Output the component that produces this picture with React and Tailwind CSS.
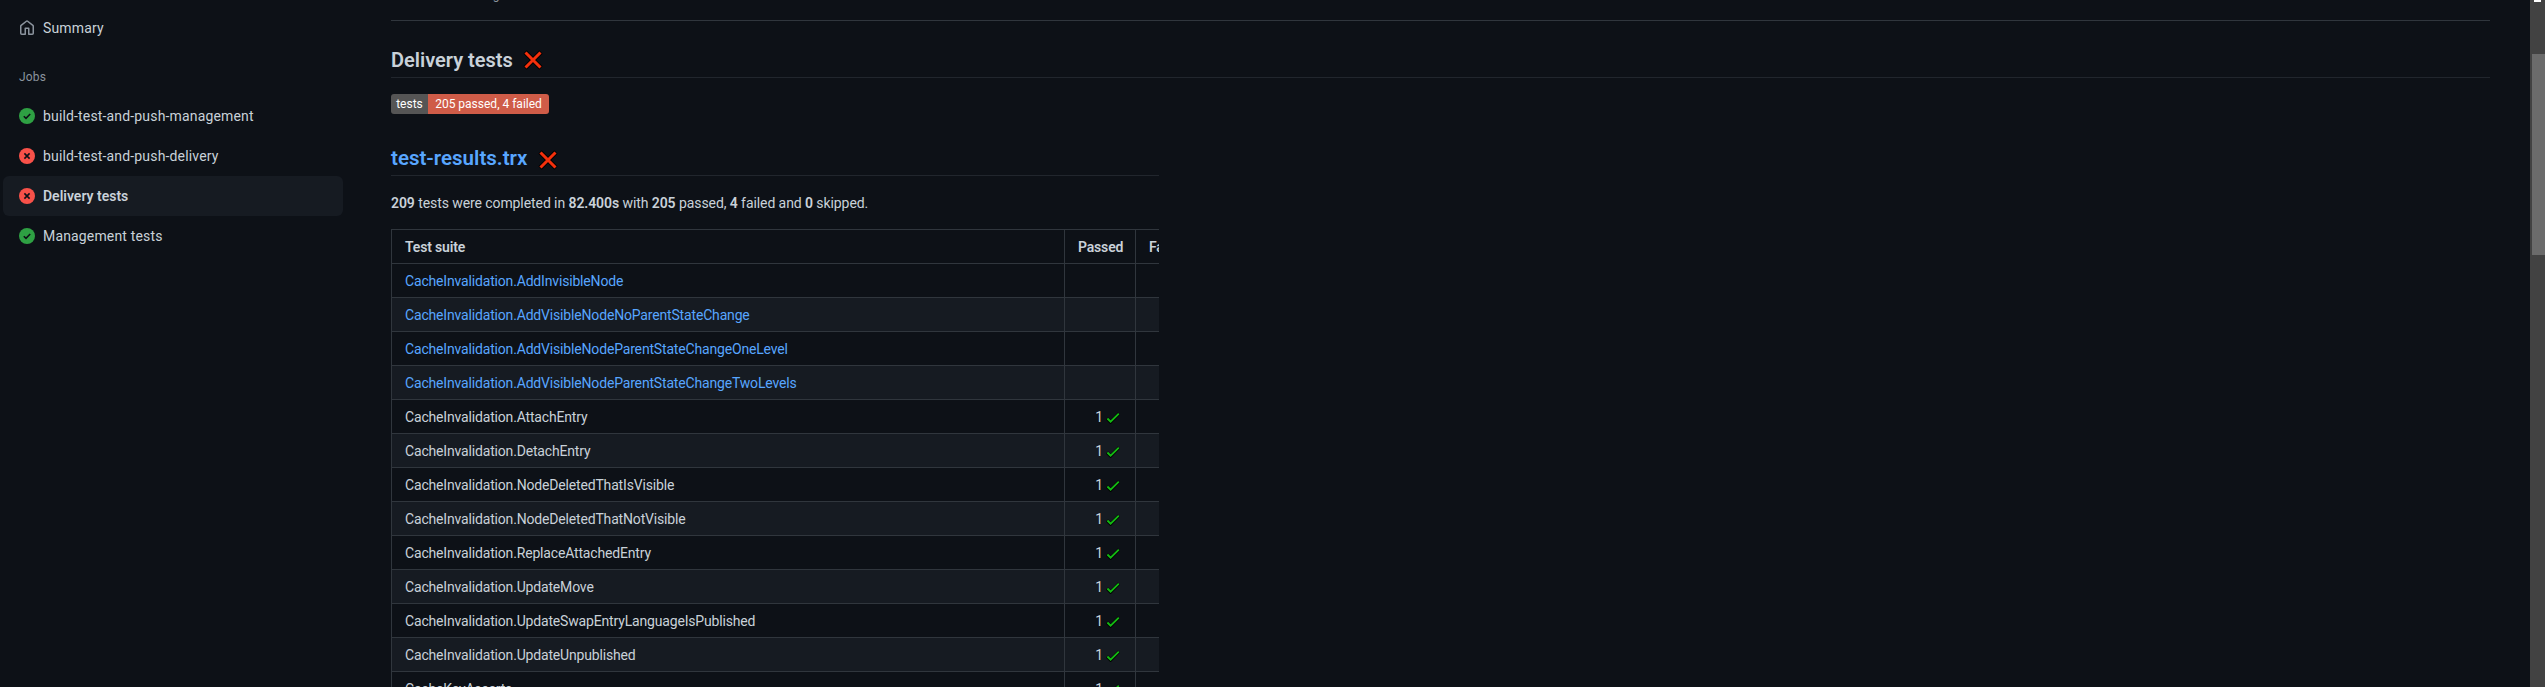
const suites = [
  { name: "CacheInvalidation.AddInvisibleNode", link: true },
  { name: "CacheInvalidation.AddVisibleNodeNoParentStateChange", link: true },
  { name: "CacheInvalidation.AddVisibleNodeParentStateChangeOneLevel", link: true },
  { name: "CacheInvalidation.AddVisibleNodeParentStateChangeTwoLevels", link: true },
  { name: "CacheInvalidation.AttachEntry", passed: 1 },
  { name: "CacheInvalidation.DetachEntry", passed: 1 },
  { name: "CacheInvalidation.NodeDeletedThatIsVisible", passed: 1 },
  { name: "CacheInvalidation.NodeDeletedThatNotVisible", passed: 1 },
  { name: "CacheInvalidation.ReplaceAttachedEntry", passed: 1 },
  { name: "CacheInvalidation.UpdateMove", passed: 1 },
  { name: "CacheInvalidation.UpdateSwapEntryLanguageIsPublished", passed: 1 },
  { name: "CacheInvalidation.UpdateUnpublished", passed: 1 },
  { name: "CacheKeyAsserts", passed: 1 },
];

const jobs = [
  { name: "build-test-and-push-management", ok: true },
  { name: "build-test-and-push-delivery", ok: false },
  { name: "Delivery tests", ok: false, active: true },
  { name: "Management tests", ok: true },
];

function StatusIcon({ ok }) {
  return (
    <svg width="16" height="16" viewBox="0 0 16 16" className="shrink-0">
      <circle cx="8" cy="8" r="8" fill={ok ? "#2ea043" : "#f85149"} />
      {ok ? (
        <path d="M4.8 8.2l2.2 2.2 4.2-4.4" fill="none" stroke="#0d1117" strokeWidth="1.6" />
      ) : (
        <path d="M5.4 5.4l5.2 5.2M10.6 5.4l-5.2 5.2" fill="none" stroke="#0d1117" strokeWidth="1.6" />
      )}
    </svg>
  );
}

function RedCross({ className = "" }) {
  return (
    <svg width="20" height="20" viewBox="0 0 20 20" className={`shrink-0 ${className}`}>
      <path d="M2 2l16 16M18 2L2 18" stroke="#000" strokeWidth="4.6" />
      <path d="M2.5 2.5l15 15M17.5 2.5l-15 15" stroke="#f4300c" strokeWidth="3" />
    </svg>
  );
}

function GreenCheck() {
  return (
    <svg width="14" height="12" viewBox="0 0 14 12" className="shrink-0">
      <path d="M1 6.5l3.6 3.6L13 1.6" fill="none" stroke="#000" strokeWidth="3.2" />
      <path d="M1.4 6.5l3.2 3.2L12.8 1.6" fill="none" stroke="#13b913" strokeWidth="1.9" />
    </svg>
  );
}

function Sidebar() {
  return (
    <aside className="w-[344px] shrink-0 pl-[3px] pt-[12px] text-[14px] tracking-[0.16px] text-[#c9d1d9]">
      <div className="w-[340px] h-[32px] pl-[16px] flex items-center gap-[8px]">
        <svg width="16" height="16" viewBox="0 0 16 16" fill="#8b949e">
          <path d="M6.906.664a1.749 1.749 0 0 1 2.187 0l5.25 4.2c.415.332.657.835.657 1.367v7.019A1.75 1.75 0 0 1 13.25 15h-3.5a.75.75 0 0 1-.75-.75V9H7v5.25a.75.75 0 0 1-.75.75h-3.5A1.75 1.75 0 0 1 1 13.25V6.23c0-.531.242-1.034.657-1.366l5.25-4.2Zm1.25 1.171a.25.25 0 0 0-.312 0l-5.25 4.2a.25.25 0 0 0-.094.196v7.019c0 .138.112.25.25.25H5.5V8.25a.75.75 0 0 1 .75-.75h3.5a.75.75 0 0 1 .75.75v5.25h2.75a.25.25 0 0 0 .25-.25V6.23a.25.25 0 0 0-.094-.195Z" />
        </svg>
        <span>Summary</span>
      </div>
      <div className="mt-[23px] mb-[9px] pl-[16px] text-[12px] leading-[20px] text-[#8b949e]">Jobs</div>
      <ul className="flex flex-col w-[340px]">
        {jobs.map((j) => (
          <li
            key={j.name}
            className={`h-[40px] pl-[16px] flex items-center gap-[8px] rounded-[6px] ${j.active ? "bg-[#161b22] font-semibold tracking-normal" : ""}`}
          >
            <StatusIcon ok={j.ok} />
            <span>{j.name}</span>
          </li>
        ))}
      </ul>
    </aside>
  );
}

function ResultsTable() {
  return (
    <div className="w-[768px] overflow-hidden mt-[15px]">
      <table className="w-[900px] table-fixed border-collapse text-[14px] leading-[21px] tracking-[-0.17px] text-[#c9d1d9]">
        <colgroup>
          <col className="w-[673px]" />
          <col className="w-[71px]" />
          <col className="w-[156px]" />
        </colgroup>
        <thead>
          <tr className="h-[34px]">
            <th className="border border-[#30363d] px-[13px] pt-[2px] text-left font-semibold">Test suite</th>
            <th className="border border-[#30363d] px-[13px] pt-[2px] font-semibold">Passed</th>
            <th className="border border-[#30363d] px-[13px] pt-[2px] text-left font-semibold">Failed</th>
          </tr>
        </thead>
        <tbody>
          {suites.map((s, i) => (
            <tr key={s.name} className={`h-[34px] ${i % 2 === 0 ? "" : "bg-[#161b22]"}`}>
              <td className={`border border-[#30363d] px-[13px] pt-[2px] ${s.link ? "text-[#58a6ff]" : ""}`}>{s.name}</td>
              <td className="border border-[#30363d] px-[13px] pt-[2px]">
                {s.passed && (
                  <div className="flex items-center justify-end gap-[3px] mr-[2px]">
                    <span>{s.passed}</span>
                    <GreenCheck />
                  </div>
                )}
              </td>
              <td className="border border-[#30363d] px-[13px]"></td>
            </tr>
          ))}
        </tbody>
      </table>
    </div>
  );
}

function Main() {
  return (
    <main className="flex-1 min-w-0 pl-[47px] text-[#c9d1d9]">
      <div className="-mt-[15px] text-[12px] leading-[20px] text-[#8b949e]">failed 15 minutes ago in 8s</div>
      <div className="w-[2099px] border-b border-[#30363d] mt-[15px]"></div>

      <h2 className="w-[2099px] mt-[23px] pb-[1px] flex items-center gap-[10px] text-[20px] leading-[32px] font-semibold border-b border-[#21262d]">
        Delivery tests <RedCross />
      </h2>

      <div className="mt-[16px] h-[20px] w-[158px] flex text-[12px] leading-[20px] rounded-[3px] overflow-hidden text-white">
        <span className="w-[37px] bg-[#555] text-center">tests</span>
        <span className="flex-1 bg-[#cf5c48] text-center">205 passed, 4 failed</span>
      </div>

      <h3 className="w-[768px] mt-[28px] pb-[1px] flex items-center gap-[11px] text-[20.5px] leading-[32px] font-semibold text-[#58a6ff] border-b border-[#21262d]">
        test-results.trx <RedCross className="mt-[3px]" />
      </h3>

      <p className="mt-[17px] text-[14px] leading-[21px] tracking-[-0.08px]">
        <b className="font-semibold">209</b> tests were completed in <b className="font-semibold">82.400s</b> with{" "}
        <b className="font-semibold">205</b> passed, <b className="font-semibold">4</b> failed and{" "}
        <b className="font-semibold">0</b> skipped.
      </p>

      <ResultsTable />
    </main>
  );
}

function Scrollbar() {
  return (
    <div className="w-[15px] shrink-0 bg-[#424242] flex flex-col items-end">
      <div className="h-[17px] w-full flex items-start justify-center">
        <div className="w-[7px] h-[2px] bg-white"></div>
      </div>
      <div className="mt-[37px] w-[13px] h-[201px] bg-[#6b6b6b]"></div>
    </div>
  );
}

export default function App() {
  return (
    <div className="h-[687px] flex overflow-hidden bg-[#0d1117] font-['Roboto',sans-serif]">
      <Sidebar />
      <Main />
      <Scrollbar />
    </div>
  );
}
